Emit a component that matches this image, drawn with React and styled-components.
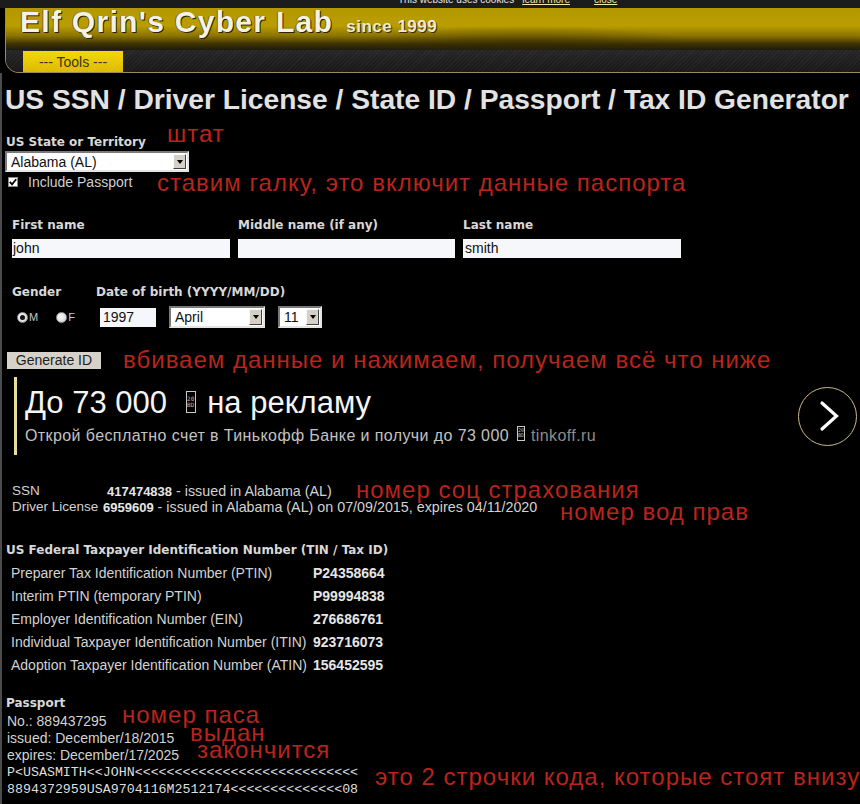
import styled, { createGlobalStyle } from "styled-components"

const GlobalStyle = createGlobalStyle`
  html, body { margin: 0; padding: 0; background: #000; }
  body { font-family: "Liberation Sans", Arial, sans-serif; color: #d4d4d4; }
  * { box-sizing: border-box; }
`

const Page = styled.div`
  position: relative;
  width: 860px;
  height: 804px;
  overflow: hidden;
  background: #000;
`

/* ---- top strip + header ---- */
const CookieBar = styled.div`
  height: 8px;
  background: #1c1c1c;
  overflow: hidden;
  display: flex;
  align-items: flex-start;
  padding-left: 398px;
`
const CookieText = styled.span`
  margin-top: -6px;
  margin-right: ${p => p.$gap || 0}px;
  font-size: 10px;
  line-height: 12px;
  color: ${p => (p.$link ? "#f3e6a6" : "#e6e6e6")};
  text-decoration: ${p => (p.$link ? "underline" : "none")};
`

const Header = styled.header`
  margin-left: 5px;
  border-left: 1px solid #8e8a7c;
  border-bottom: 1px solid #9a8a5c;
  border-bottom-left-radius: 14px;
  overflow: hidden;
`
const Banner = styled.div`
  height: 42px;
  display: flex;
  align-items: baseline;
  gap: 13px;
  padding-left: 14px;
  background:
    radial-gradient(ellipse 240px 26px at 520px 36px, rgba(50, 38, 0, 0.5), transparent 70%),
    linear-gradient(180deg, #b39700 0%, #ba9e00 42%, #8c7400 66%, #3c3200 86%, #1c1b14 100%);
`
const SiteName = styled.h1`
  margin: 0;
  font-size: 30px;
  line-height: 28px;
  font-weight: bold;
  letter-spacing: 1.3px;
  color: #f4f2e4;
  text-shadow: 1px 1px 0 #2a2200, -1px 0 0 rgba(60, 50, 0, 0.6);
`
const Since = styled.span`
  font-size: 17px;
  font-weight: bold;
  letter-spacing: 0.5px;
  color: #ece8d2;
  text-shadow: 1px 1px 0 #3a3000;
`
const NavBar = styled.nav`
  height: 22px;
  padding: 1px 0 0 17px;
  background:
    repeating-linear-gradient(-45deg, rgba(255,255,255,0.035) 0 1px, transparent 1px 3px),
    linear-gradient(180deg, #262626, #181818);
`
const Tab = styled.div`
  width: 100px;
  height: 21px;
  display: flex;
  align-items: center;
  justify-content: center;
  font-size: 14px;
  color: #3a3520;
  background:
    repeating-linear-gradient(-45deg, rgba(255,255,255,0.08) 0 1px, transparent 1px 3px),
    linear-gradient(180deg, #f4d600, #dcb900);
`

/* ---- content ---- */
const Content = styled.main`
  border-left: 2px solid #4c4c4c;
  padding-left: 3px;
  display: flex;
  flex-direction: column;
  align-items: flex-start;
  height: 731px;
`
const Title = styled.h2`
  margin: 10px 0 0 0;
  font-size: 28.2px;
  line-height: 32px;
  font-weight: bold;
  color: #e2e2e2;
  white-space: nowrap;
`
const Label = styled.div`
  margin: ${p => p.$mt || 0}px 0 0 ${p => p.$ml || 0}px;
  font-family: "DejaVu Sans", Verdana, sans-serif;
  font-weight: bold;
  font-size: 12px;
  line-height: 14px;
  color: #d8d8d8;
  white-space: nowrap;
`

const Select = styled.div`
  display: flex;
  align-items: center;
  width: ${p => p.$w}px;
  height: ${p => p.$h || 21}px;
  margin-top: ${p => p.$mt || 0}px;
  background: #fff;
  border: 2px solid;
  border-color: #7a7a7a #e4e4e4 #e4e4e4 #7a7a7a;
`
const SelectText = styled.span`
  flex: 1;
  padding-left: 4px;
  font-size: 14px;
  color: #111;
  white-space: nowrap;
`
const SelectArrow = styled.span`
  width: 13px;
  height: calc(100% - 2px);
  margin-right: 1px;
  display: flex;
  align-items: center;
  justify-content: center;
  background: #d4d0c8;
  border: 1px solid;
  border-color: #fafafa #404040 #404040 #fafafa;
  &::after {
    content: "";
    border-left: 3.5px solid transparent;
    border-right: 3.5px solid transparent;
    border-top: 4px solid #000;
  }
`

const CheckRow = styled.label`
  display: flex;
  align-items: center;
  gap: 10px;
  margin: 2px 0 0 3px;
  font-size: 14px;
  line-height: 16px;
  color: #cfcfcf;
`
const CheckBox = styled.span`
  width: 10px;
  height: 10px;
  display: flex;
  align-items: center;
  justify-content: center;
  background: #fff;
  border: 1px solid #8a8a8a;
`

const NameGrid = styled.div`
  display: grid;
  grid-template-columns: 218px 217px 218px;
  column-gap: 8px;
  margin: 28px 0 0 7px;
`
const Field = styled.div`
  display: flex;
  flex-direction: column;
  gap: 7px;
`
const TextBox = styled.div`
  width: ${p => (p.$w ? `${p.$w}px` : "100%")};
  height: 19px;
  padding-left: ${p => p.$pl || 1}px;
  background: #f6f7fb;
  font-size: 14px;
  line-height: 19px;
  color: #111;
`

const BirthRow = styled.div`
  display: flex;
  margin: 27px 0 0 7px;
`
const GenderCol = styled.div`
  width: 84px;
  display: flex;
  flex-direction: column;
`
const DobCol = styled.div`
  display: flex;
  flex-direction: column;
`
const Controls = styled.div`
  display: flex;
  align-items: center;
  gap: ${p => p.$gap || 0}px;
  height: 22px;
  margin-top: 7px;
  padding-left: ${p => p.$pl || 0}px;
`
const RadioItem = styled.span`
  display: flex;
  align-items: center;
  gap: 1px;
  font-size: 11px;
  color: #c8c8c8;
`
const Radio = styled.span`
  width: 11px;
  height: 11px;
  border-radius: 50%;
  border: 1px solid #9a9a9a;
  background: radial-gradient(circle at 40% 40%, #fafafa, #cfcfcf);
  display: flex;
  align-items: center;
  justify-content: center;
  &::after {
    content: "";
    width: 5px;
    height: 5px;
    border-radius: 50%;
    background: ${p => (p.$on ? "#111" : "transparent")};
  }
`

const Button = styled.button`
  margin: 24px 0 0 2px;
  width: 94px;
  height: 17px;
  padding: 0;
  border: none;
  background: #d6d2ca;
  font-family: "Liberation Sans", Arial, sans-serif;
  font-size: 14px;
  line-height: 17px;
  color: #222;
`

/* ---- ad ---- */
const Ad = styled.div`
  align-self: stretch;
  display: flex;
  align-items: center;
  justify-content: space-between;
  margin-top: 8px;
  padding: 0 3px 0 9px;
`
const AdText = styled.div`
  height: 78px;
  border-left: 3px solid #e6dc9e;
  padding: 8px 0 0 8px;
`
const AdHead = styled.div`
  font-size: 31px;
  line-height: 36px;
  color: #f4f4f4;
  white-space: nowrap;
`
const AdSub = styled.div`
  margin-top: 5px;
  font-size: 16px;
  line-height: 18px;
  letter-spacing: 0.4px;
  color: #c2c2c2;
  white-space: nowrap;
`
const AdDomain = styled.span`
  color: #8c8c8c;
`
const Tofu = styled.span`
  display: inline-block;
  overflow: hidden;
  vertical-align: baseline;
  width: ${p => p.$w}px;
  height: ${p => p.$h}px;
  margin: 0 ${p => p.$mr}px 0 ${p => p.$ml}px;
  padding-top: ${p => p.$pt}px;
  border: 1px solid #c8c8c8;
  text-align: center;
  font-family: "DejaVu Sans Mono", monospace;
  font-size: ${p => p.$fs}px;
  line-height: ${p => p.$fs}px;
  letter-spacing: 0;
  color: #bdbdbd;
  & > span { display: block; }
`
const NextButton = styled.div`
  width: 59px;
  height: 59px;
  border-radius: 50%;
  border: 1.5px solid #c9b98c;
  display: flex;
  align-items: center;
  justify-content: center;
`

/* ---- results ---- */
const InfoGrid = styled.div`
  display: grid;
  grid-template-columns: ${p => p.$col}px auto;
  grid-auto-rows: ${p => p.$row}px;
  margin: ${p => p.$mt}px 0 0 ${p => p.$ml}px;
  font-size: ${p => p.$fs || 14}px;
  line-height: ${p => p.$row}px;
  color: #d2d2d2;
  white-space: nowrap;
`
const IdValue = styled.span`
  font-size: 14.3px;
`
const Strong = styled.b`
  font-size: ${p => p.$fs || 13}px;
  color: #e6e6e6;
`

const PassportLines = styled.div`
  margin: 3px 0 0 2px;
  font-size: 14px;
  line-height: 17px;
  color: #d2d2d2;
`
const Mrz = styled.div`
  margin-left: 2px;
  font-family: "Liberation Mono", "Courier New", monospace;
  font-size: 13.3px;
  line-height: 17px;
  color: #dedede;
  white-space: pre;
`

/* ---- red annotations drawn over the screenshot ---- */
const Note = styled.span`
  position: absolute;
  left: ${p => p.$x}px;
  top: ${p => p.$y}px;
  font-family: "Liberation Sans", Arial, sans-serif;
  font-size: 24px;
  line-height: 24px;
  letter-spacing: 1px;
  color: #b9241c;
  white-space: nowrap;
`

const tin = [
  ["Preparer Tax Identification Number (PTIN)", "P24358664"],
  ["Interim PTIN (temporary PTIN)", "P99994838"],
  ["Employer Identification Number (EIN)", "276686761"],
  ["Individual Taxpayer Identification Number (ITIN)", "923716073"],
  ["Adoption Taxpayer Identification Number (ATIN)", "156452595"],
]

const notes = [
  [167, 122, "штат"],
  [157, 171, "ставим галку, это включит данные паспорта"],
  [123, 348, "вбиваем данные и нажимаем, получаем всё что ниже"],
  [356, 478, "номер соц страхования"],
  [560, 500, "номер вод прав"],
  [122, 703, "номер паса"],
  [190, 721, "выдан"],
  [197, 738, "закончится"],
  [375, 765, "это 2 строчки кода, которые стоят внизу"],
]

export default function App() {
  return (
    <Page>
      <GlobalStyle />
      <CookieBar>
        <CookieText $gap={8}>This website uses cookies</CookieText>
        <CookieText $link $gap={24}>learn more</CookieText>
        <CookieText $link>close</CookieText>
      </CookieBar>
      <Header>
        <Banner>
          <SiteName>Elf Qrin's Cyber Lab</SiteName>
          <Since>since 1999</Since>
        </Banner>
        <NavBar>
          <Tab>--- Tools ---</Tab>
        </NavBar>
      </Header>

      <Content>
        <Title>US SSN / Driver License / State ID / Passport / Tax ID Generator</Title>

        <Label $mt={20} $ml={1}>US State or Territory</Label>
        <Select $w={184} $mt={2}>
          <SelectText>Alabama (AL)</SelectText>
          <SelectArrow />
        </Select>
        <CheckRow>
          <CheckBox>
            <svg width="8" height="8" viewBox="0 0 8 8">
              <path d="M0.8 3.8 L3 6.3 L7.2 1.2" fill="none" stroke="#000" strokeWidth="1.8" />
            </svg>
          </CheckBox>
          Include Passport
        </CheckRow>

        <NameGrid>
          <Field>
            <Label>First name</Label>
            <TextBox>john</TextBox>
          </Field>
          <Field>
            <Label>Middle name (if any)</Label>
            <TextBox />
          </Field>
          <Field>
            <Label>Last name</Label>
            <TextBox $pl={2}>smith</TextBox>
          </Field>
        </NameGrid>

        <BirthRow>
          <GenderCol>
            <Label>Gender</Label>
            <Controls $gap={18} $pl={5}>
              <RadioItem><Radio $on />M</RadioItem>
              <RadioItem><Radio />F</RadioItem>
            </Controls>
          </GenderCol>
          <DobCol>
            <Label>Date of birth (YYYY/MM/DD)</Label>
            <Controls $gap={13} $pl={4}>
              <TextBox $w={56} $pl={3}>1997</TextBox>
              <Select $w={96} $h={22}>
                <SelectText>April</SelectText>
                <SelectArrow />
              </Select>
              <Select $w={44} $h={22}>
                <SelectText>11</SelectText>
                <SelectArrow />
              </Select>
            </Controls>
          </DobCol>
        </BirthRow>

        <Button>Generate ID</Button>

        <Ad>
          <AdText>
            <AdHead>
              До 73 000 <Tofu $w={10} $h={22} $ml={10} $mr={3} $pt={4} $fs={6}><span>20</span><span>BD</span></Tofu> на рекламу
            </AdHead>
            <AdSub>
              Открой бесплатно счет в Тинькофф Банке и получи до 73 000
              <Tofu $w={8} $h={15} $ml={8} $mr={6} $pt={1} $fs={5}><span>20</span><span>BD</span></Tofu>
              <AdDomain>tinkoff.ru</AdDomain>
            </AdSub>
          </AdText>
          <NextButton>
            <svg width="56" height="56" viewBox="0 0 56 56">
              <path d="M22 15 L36.5 28 L22 41" fill="none" stroke="#fff" strokeWidth="3.2" strokeLinecap="round" />
            </svg>
          </NextButton>
        </Ad>

        <InfoGrid $col={91} $row={16} $mt={28} $ml={7} $fs={13.5}>
          <span>SSN</span>
          <IdValue>{"\u00a0"}<Strong>417474838</Strong> - issued in Alabama (AL)</IdValue>
          <span>Driver License</span>
          <IdValue><Strong>6959609</Strong> - issued in Alabama (AL) on 07/09/2015, expires 04/11/2020</IdValue>
        </InfoGrid>

        <Label $mt={28} $ml={1}>US Federal Taxpayer Identification Number (TIN / Tax ID)</Label>
        <InfoGrid $col={302} $row={23} $mt={5} $ml={6}>
          {tin.map(([name, value]) => (
            <>
              <span key={name}>{name}</span>
              <Strong key={value} $fs={14}>{value}</Strong>
            </>
          ))}
        </InfoGrid>

        <Label $mt={19} $ml={1}>Passport</Label>
        <PassportLines>
          <div>No.: 889437295</div>
          <div>issued: December/18/2015</div>
          <div>expires: December/17/2025</div>
        </PassportLines>
        <Mrz>{"P<USASMITH<<JOHN<<<<<<<<<<<<<<<<<<<<<<<<<<<<"}</Mrz>
        <Mrz>{"8894372959USA9704116M2512174<<<<<<<<<<<<<<08"}</Mrz>
      </Content>

      {notes.map(([x, y, text]) => (
        <Note key={text} $x={x} $y={y}>{text}</Note>
      ))}
    </Page>
  )
}
